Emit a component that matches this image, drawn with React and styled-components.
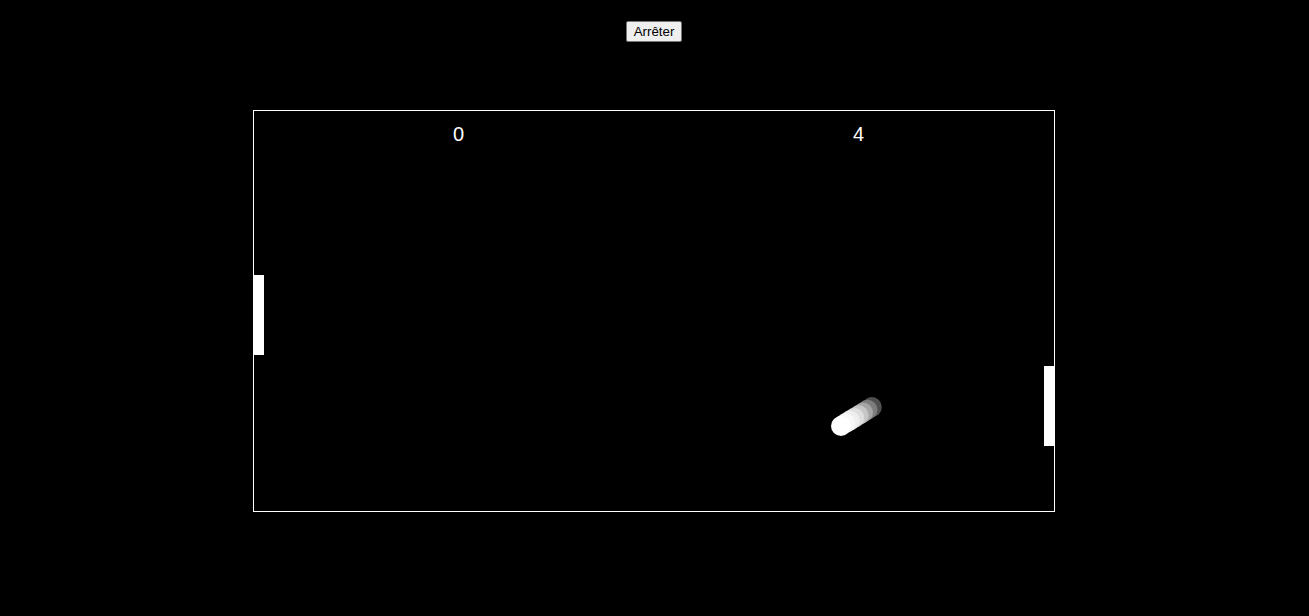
import React from 'react';
import styled, { createGlobalStyle } from 'styled-components';

const GlobalStyle = createGlobalStyle`
  html, body {
    margin: 0;
    background: #000;
    font-family: 'Liberation Sans', Arial, sans-serif;
  }
`;

const Page = styled.div`
  display: flex;
  flex-direction: column;
  align-items: center;
  min-height: 616px;
  padding: 21px 1px 0 0;
  box-sizing: border-box;
  background: #000;
`;

const StopButton = styled.button`
  font-family: 'Liberation Sans', Arial, sans-serif;
  font-size: 13.33px;
  line-height: 15px;
  color: #000;
  background: #efefef;
  border: 1px solid #767676;
  border-radius: 2px;
  padding: 2px 7px;
  cursor: pointer;
`;

const Board = styled.div`
  position: relative;
  width: 800px;
  height: 400px;
  margin-top: 68px;
  border: 1px solid #fff;
  overflow: hidden;
`;

const ScoreRow = styled.div`
  display: flex;
  padding-top: 13px;
`;

const Score = styled.div`
  width: 400px;
  padding-left: 199px;
  box-sizing: border-box;
  color: #fff;
  font-size: 20px;
  line-height: 20px;
`;

// paddles sit on the playfield at their game coordinates
const Paddle = styled.div`
  position: absolute;
  top: ${(p) => p.$y}px;
  ${(p) => (p.$side === 'left' ? 'left: 0;' : 'right: 0;')}
  width: 10px;
  height: 80px;
  background: #fff;
`;

const Trail = styled.svg`
  position: absolute;
  left: 0;
  top: 0;
`;

const ball = { x: 587, y: 315, r: 10, dx: 4.4, dy: -2.7 };
const shades = [255, 248, 238, 222, 198, 165, 125, 80];

function App() {
  const scores = [0, 4];
  const paddles = [
    { side: 'left', y: 164 },
    { side: 'right', y: 255 },
  ];

  return (
    <>
      <GlobalStyle />
      <Page>
        <StopButton>Arrêter</StopButton>
        <Board>
          <ScoreRow>
            {scores.map((s, i) => (
              <Score key={i}>{s}</Score>
            ))}
          </ScoreRow>
          {paddles.map((p) => (
            <Paddle key={p.side} $side={p.side} $y={p.y} />
          ))}
          <Trail width='800' height='400' viewBox='0 0 800 400'>
            {shades
              .map((g, i) => (
                <circle
                  key={i}
                  cx={ball.x + ball.dx * i}
                  cy={ball.y + ball.dy * i}
                  r={ball.r}
                  fill={`rgb(${g},${g},${g})`}
                />
              ))
              .reverse()}
          </Trail>
        </Board>
      </Page>
    </>
  );
}

export default App;
